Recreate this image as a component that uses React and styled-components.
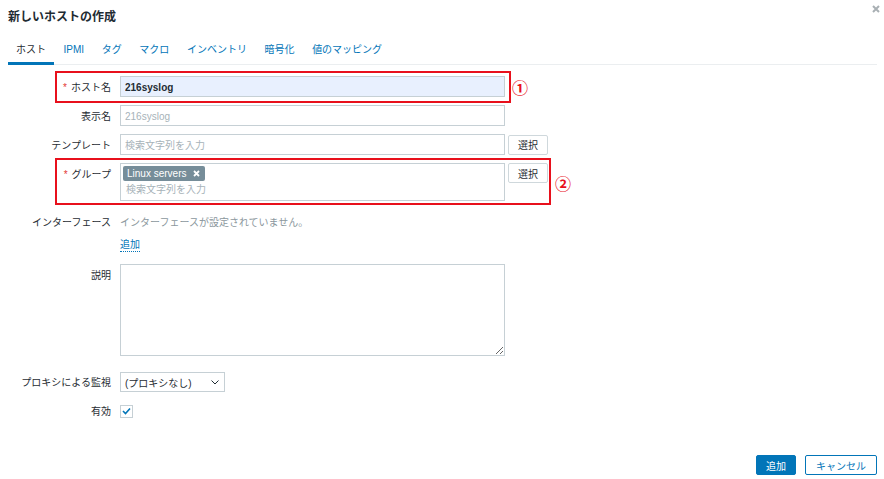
import React from "react";
import styled, { createGlobalStyle } from "styled-components";

const GlobalStyle = createGlobalStyle`
  html, body { margin: 0; padding: 0; background: #ffffff; }
  body {
    font-family: "Liberation Sans", "Noto Sans CJK JP", sans-serif;
    font-size: 10px;
    color: #1f2c33;
  }
  * { box-sizing: border-box; }
`;

const Dialog = styled.div`
  position: relative;
  width: 884px;
  height: 479px;
  display: flex;
  flex-direction: column;
  background: #fff;
`;

const Header = styled.div`
  display: flex;
  justify-content: space-between;
  align-items: flex-start;
  height: 37px;
  padding: 10px 4px 0 8px;
`;

const Title = styled.h1`
  margin: 0;
  font-size: 12px;
  line-height: 14px;
  font-weight: bold;
  color: #1f2c33;
`;

const CloseBtn = styled.button`
  margin-top: -6px;
  width: 9px;
  height: 9px;
  padding: 0;
  border: 0;
  background: none;
  display: flex;
  align-items: center;
  justify-content: center;
`;

const TabBar = styled.div`
  display: flex;
  gap: 1.6px;
  margin: 0 7px 0 8px;
  border-bottom: 1px solid #ebeef0;
`;

const Tab = styled.div`
  height: 28px;
  padding: 1px 8px 0;
  line-height: 24px;
  margin-bottom: -1px;
  font-size: 10px;
  color: ${(p) => (p.$active ? "#1f2c33" : "#0275b8")};
  border-bottom: 3px solid ${(p) => (p.$active ? "#0275b8" : "transparent")};
  white-space: nowrap;
`;

const Form = styled.div`
  padding-top: 11px;
`;

const Row = styled.div`
  display: grid;
  grid-template-columns: 111px auto;
  column-gap: 9px;
  align-items: stretch;
  margin-top: ${(p) => p.$mt || 0}px;
`;

const Label = styled.div`
  text-align: right;
  height: ${(p) => p.$h || 21}px;
  padding-top: 2px;
  line-height: ${(p) => (p.$h || 21) - 2}px;
  white-space: nowrap;
  color: #1f2c33;
`;

const Req = styled.span`
  color: #e33734;
  margin-right: 4px;
`;

const Field = styled.div`
  display: flex;
  align-items: ${(p) => (p.$top ? "flex-start" : "center")};
  gap: ${(p) => (p.$column ? 0 : 3)}px;
  flex-direction: ${(p) => (p.$column ? "column" : "row")};
`;

const TextInput = styled.input`
  width: 385px;
  height: 21px;
  padding: 1px 4px 0;
  border: 1px solid #c6d0d5;
  background: ${(p) => (p.$filled ? "#e8f0fe" : "#fff")};
  font-family: inherit;
  font-size: 10px;
  font-weight: ${(p) => (p.$filled ? "bold" : "normal")};
  color: #1f2c33;
  outline: none;
  &::placeholder { color: #a7b3b9; }
`;

const SelectButton = styled.button`
  width: 40px;
  height: 20px;
  padding: 0;
  border: 1px solid #cfd8dc;
  background: #fff;
  font-family: inherit;
  font-size: 10px;
  color: #1f2c33;
  border-radius: 2px;
`;

const Multi = styled.div`
  width: 385px;
  height: 38px;
  border: 1px solid #c6d0d5;
  padding: 2px 2px 0 2px;
  display: flex;
  flex-direction: column;
  align-items: flex-start;
`;

const TagChip = styled.span`
  display: inline-flex;
  align-items: center;
  gap: 7px;
  height: 15px;
  padding: 0 5px 0 4px;
  background: #768d99;
  color: #fff;
  font-size: 10px;
  border-radius: 2px;
`;

const Placeholder = styled.span`
  color: #a7b3b9;
  height: 18px;
  line-height: 18px;
  padding-left: 3px;
`;

const Muted = styled.span`
  color: #8b979d;
  height: 14px;
  padding-top: 1px;
  line-height: 13px;
`;

const LinkText = styled.a`
  margin-top: 10px;
  height: 13px;
  color: #0275b8;
  line-height: 12px;
  border-bottom: 1px dotted #0275b8;
  text-decoration: none;
`;

const TextArea = styled.textarea`
  width: 385px;
  height: 92px;
  border: 1px solid #c6d0d5;
  font-family: inherit;
  font-size: 10px;
  outline: none;
  display: block;
`;

const FakeSelect = styled.div`
  width: 105px;
  height: 20px;
  border: 1px solid #c6d0d5;
  display: flex;
  align-items: center;
  justify-content: space-between;
  padding: 0 5px 0 4px;
  color: #1f2c33;
`;

const CheckBox = styled.span`
  width: 13px;
  height: 13px;
  border: 1px solid #c6d0d5;
  display: flex;
  align-items: center;
  justify-content: center;
  background: #fff;
`;

const Footer = styled.div`
  margin-top: auto;
  display: flex;
  justify-content: flex-end;
  gap: 9px;
  padding: 0 7px 4px 0;
`;

const PrimaryBtn = styled.button`
  height: 20px;
  padding: 0 9px;
  border: 1px solid #0275b8;
  background: #0275b8;
  color: #fff;
  font-family: inherit;
  font-size: 10px;
  border-radius: 2px;
`;

const SecondaryBtn = styled(PrimaryBtn)`
  background: #fff;
  color: #0275b8;
  padding: 0 10px;
`;

const Annotation = styled.div`
  position: absolute;
  left: ${(p) => p.$x}px;
  top: ${(p) => p.$y}px;
  width: ${(p) => p.$w}px;
  height: ${(p) => p.$h}px;
  border: 2px solid #e8101c;
  pointer-events: none;
`;

const Marker = styled.span`
  position: absolute;
  left: ${(p) => p.$x}px;
  top: ${(p) => p.$y}px;
  color: #e8101c;
  font-family: "Noto Sans CJK JP", sans-serif;
  font-size: 16px;
  font-weight: bold;
  line-height: 18px;
`;

const tabs = ["ホスト", "IPMI", "タグ", "マクロ", "インベントリ", "暗号化", "値のマッピング"];

export default function App() {
  return (
    <>
      <GlobalStyle />
      <Dialog>
        <Header>
          <Title>新しいホストの作成</Title>
          <CloseBtn aria-label="close">
            <svg width="8" height="8" viewBox="0 0 8 8">
              <path d="M1 1 L7 7 M7 1 L1 7" stroke="#a9b0b4" strokeWidth="2" />
            </svg>
          </CloseBtn>
        </Header>
        <TabBar>
          {tabs.map((t, i) => (
            <Tab key={t} $active={i === 0}>{t}</Tab>
          ))}
        </TabBar>
        <Form>
          <Row>
            <Label><Req>*</Req>ホスト名</Label>
            <Field>
              <TextInput $filled value="216syslog" readOnly />
            </Field>
          </Row>
          <Row $mt={8}>
            <Label>表示名</Label>
            <Field>
              <TextInput placeholder="216syslog" readOnly />
            </Field>
          </Row>
          <Row $mt={8}>
            <Label>テンプレート</Label>
            <Field>
              <TextInput placeholder="検索文字列を入力" readOnly />
              <SelectButton>選択</SelectButton>
            </Field>
          </Row>
          <Row $mt={8}>
            <Label><Req>*</Req>グループ</Label>
            <Field $top>
              <Multi>
                <TagChip>
                  Linux servers
                  <svg width="7" height="7" viewBox="0 0 7 7">
                    <path d="M1 1 L6 6 M6 1 L1 6" stroke="#fff" strokeWidth="1.8" />
                  </svg>
                </TagChip>
                <Placeholder>検索文字列を入力</Placeholder>
              </Multi>
              <SelectButton>選択</SelectButton>
            </Field>
          </Row>
          <Row $mt={14}>
            <Label $h={14}>インターフェース</Label>
            <Field $column $top>
              <Muted>インターフェースが設定されていません。</Muted>
              <LinkText>追加</LinkText>
            </Field>
          </Row>
          <Row $mt={12}>
            <Label>説明</Label>
            <Field $top>
              <TextArea readOnly />
            </Field>
          </Row>
          <Row $mt={16}>
            <Label $h={20}>プロキシによる監視</Label>
            <Field>
              <FakeSelect>
                <span>(プロキシなし)</span>
                <svg width="8" height="5" viewBox="0 0 8 5">
                  <path d="M0.5 0.5 L4 4 L7.5 0.5" stroke="#1f2c33" strokeWidth="1" fill="none" />
                </svg>
              </FakeSelect>
            </Field>
          </Row>
          <Row $mt={9}>
            <Label $h={20}>有効</Label>
            <Field>
              <CheckBox>
                <svg width="9" height="8" viewBox="0 0 9 8">
                  <path d="M1 4 L3.5 6.5 L8 1.5" stroke="#0275b8" strokeWidth="1.6" fill="none" />
                </svg>
              </CheckBox>
            </Field>
          </Row>
        </Form>
        <Footer>
          <PrimaryBtn>追加</PrimaryBtn>
          <SecondaryBtn>キャンセル</SecondaryBtn>
        </Footer>
        <Annotation $x={55} $y={71} $w={456} $h={32} />
        <Annotation $x={55} $y={158} $w={496} $h={47} />
        <Marker $x={512} $y={78}>①</Marker>
        <Marker $x={555} $y={174}>②</Marker>
      </Dialog>
    </>
  );
}
